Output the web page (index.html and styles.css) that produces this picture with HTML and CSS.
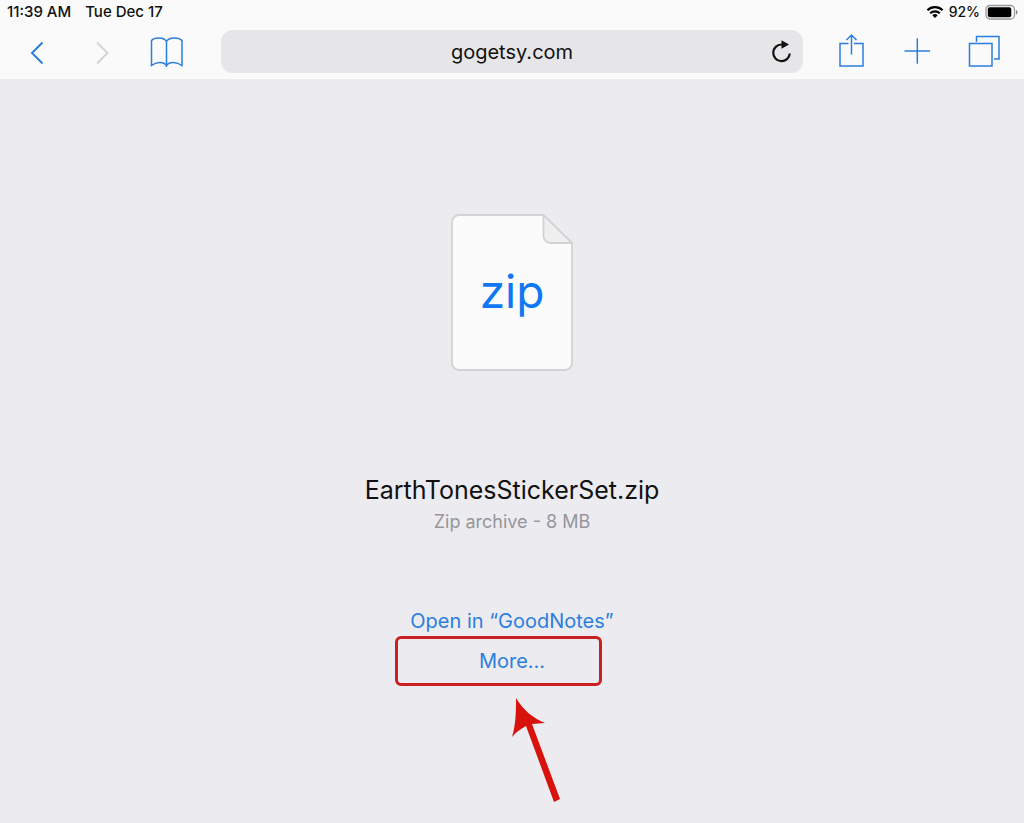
FILE: index.html
```html
<!DOCTYPE html>
<html lang="en">
<head>
<meta charset="utf-8">
<meta name="viewport" content="width=device-width, initial-scale=1">
<title>gogetsy.com</title>
<link rel="stylesheet" href="styles.css">
</head>
<body>
<header class="chrome">
  <div class="status">
    <div class="status-group status-time"><span>11:39 AM</span><span>Tue Dec 17</span></div>
    <div class="status-group">
      <svg class="wifi" width="18" height="14" viewBox="0 0 18 14" fill="none" stroke="#000" stroke-width="2.2" aria-hidden="true">
        <path d="M1.4 5.2a11 11 0 0 1 15.2 0M4.2 8.2a7 7 0 0 1 9.6 0"/>
        <path d="M9 13 6.3 10.3a3.9 3.9 0 0 1 5.4 0Z" fill="#000" stroke="none"/>
      </svg>
      <span>92%</span>
      <svg class="battery" width="33" height="16" viewBox="0 0 33 16" aria-hidden="true">
        <rect x="1" y="1.500" width="28.500" height="13.500" rx="4" fill="#fff" stroke="#999" stroke-width="1.3"/>
        <rect x="2.800" y="3.300" width="23.500" height="10" rx="2" fill="#000"/>
        <path d="M31 6v4.600c2-.6 2-4 0-4.600Z" fill="#888"/>
      </svg>
    </div>
  </div>
  <nav class="toolbar" aria-label="Browser">
    <div class="tools tools-start">
      <button class="tool" type="button" aria-label="Back"><svg width="44" height="44" viewBox="0 0 44 44"><path d="M27.500 12.500 17 23 27.500 33.500" stroke-width="2"/></svg></button>
      <button class="tool tool-off" type="button" aria-label="Forward" disabled><svg width="44" height="44" viewBox="0 0 44 44"><path d="M17 12.500 27.500 23 17 33.500" stroke-width="2"/></svg></button>
      <button class="tool" type="button" aria-label="Bookmarks"><svg width="44" height="44" viewBox="0 0 44 44"><path d="M21.500 11.500C19 7 9.500 7 6.500 10.500V35.500C11 32 18.500 31 21.500 35.500C24.500 31 32 32 37 35.500V10.500C33.500 7 24 7 21.500 11.500V37"/></svg></button>
    </div>
    <div class="address">
      <input class="address-input" type="text" value="gogetsy.com" aria-label="Address">
      <button class="reload" type="button" aria-label="Reload"><svg width="24" height="24" viewBox="0 0 24 24"><path d="M13.500 4.500H12.500A8.300 8.300 0 1 0 20.800 13.500" fill="none" stroke="#111" stroke-width="2.200"/><path d="M12.500 .3 20 4.500 12.500 8.700Z" fill="#111"/></svg></button>
    </div>
    <div class="tools tools-end">
      <button class="tool" type="button" aria-label="Share"><svg width="44" height="44" viewBox="0 0 44 44"><path d="M19.500 13.500H11V36H34V13.500H25M22.500 24.500V5M17.500 10l5-5 5 5"/></svg></button>
      <button class="tool" type="button" aria-label="New tab"><svg width="44" height="44" viewBox="0 0 44 44"><path d="M9.500 21h25.500M22.300 8.300v25.500"/></svg></button>
      <button class="tool" type="button" aria-label="Tabs"><svg width="44" height="44" viewBox="0 0 44 44"><path d="M8.500 13.500H31V36H8.500ZM15.500 12V6.500H38V29H33"/></svg></button>
    </div>
  </nav>
</header>
<main class="download">
  <div class="file">
    <svg width="124" height="160" viewBox="0 0 124 160" aria-hidden="true">
      <path d="M8 2H93L122 30V150a7 7 0 0 1-7 7H9a7 7 0 0 1-7-7V9a7 7 0 0 1 7-7Z" fill="#fbfbfc" stroke="#d3d3d5" stroke-width="1.800"/>
      <path d="M93.500 2V23a7 7 0 0 0 7 7H122Z" fill="#efeff0" stroke="#d3d3d5" stroke-width="1.800" stroke-linejoin="round"/>
    </svg>
    <span class="file-type">zip</span>
  </div>
  <h1 class="name">EarthTonesStickerSet.zip</h1>
  <p class="meta">Zip archive - 8 MB</p>
  <div class="actions">
    <button class="action" type="button">Open in “GoodNotes”</button>
    <div class="more">
      <button class="action" type="button">More...</button>
      <span class="highlight"></span>
      <svg class="arrow" width="50" height="106" viewBox="0 0 50 106" aria-hidden="true"><path d="M6 0C13 12 23 20 35 25L22 26 50 101 44 104 16 28C11 31 6 34 2 39C6 26 6 13 6 0Z" fill="#d8130e"/></svg>
    </div>
  </div>
</main>
</body>
</html>
```
FILE: styles.css
```css
* { box-sizing: border-box; }
body {
  margin: 0;
  min-height: 100vh;
  background: #ebebf0;
  color: #111;
  font-family: Inter, "Liberation Sans", sans-serif;
}
button { padding: 0; border: 0; background: none; font: inherit; color: inherit; }
.chrome { background: #fafafb; padding-bottom: 6px; }
.status {
  display: flex;
  justify-content: space-between;
  height: 24px;
  padding: 0 6px 0 7px;
  font-size: 14px;
  font-weight: 500;
  line-height: 24px;
}
.status-group { display: flex; align-items: center; gap: 5px; }
.status-time { gap: 14px; font-size: 15px; }
.toolbar { display: flex; align-items: center; padding-top: 6px; }
.tools { display: flex; flex: none; width: 221px; }
.tools-start { padding-left: 15px; gap: 21px; }
.tools-end { padding-left: 26px; gap: 22px; }
.tool { width: 44px; height: 43px; color: #2b7fdc; }
.tool svg { display: block; fill: none; stroke: currentColor; stroke-width: 1.5; }
.tool-off { color: #d5d5d8; }
.address { position: relative; flex: 1; min-width: 0; }
.address-input {
  display: block;
  width: 100%;
  height: 43px;
  padding: 0 40px;
  border: 0;
  border-radius: 12px;
  background: #e6e6e8;
  color: #111;
  font: inherit;
  font-size: 20px;
  text-align: center;
}
.reload { position: absolute; top: 10px; right: 10px; width: 24px; height: 24px; }
.reload svg { display: block; }
.download {
  display: flex;
  flex-direction: column;
  align-items: center;
  padding: 134px 16px 20px;
}
.file { display: grid; place-items: center; }
.file svg, .file-type { grid-area: 1 / 1; }
.file-type { padding-bottom: 4px; color: #0f78f2; font-size: 46px; line-height: 56px; }
.name {
  margin: 101px 0 0;
  font-size: 25px;
  font-weight: 400;
  line-height: 32px;
  overflow-wrap: anywhere;
}
.meta { margin: 4px 0 0; color: #96969b; font-size: 18px; line-height: 24px; }
.actions {
  display: flex;
  flex-direction: column;
  align-items: center;
  margin-top: 67px;
  color: #2b7fdc;
  font-size: 20px;
}
.action { height: 40px; }
.more { position: relative; display: flex; align-items: center; }
.highlight {
  position: absolute;
  top: -5px;
  left: -84px;
  width: 207px;
  height: 50px;
  border: 3px solid #c9211f;
  border-radius: 6px;
  pointer-events: none;
}
.arrow { position: absolute; top: 57px; left: 31px; }
```
